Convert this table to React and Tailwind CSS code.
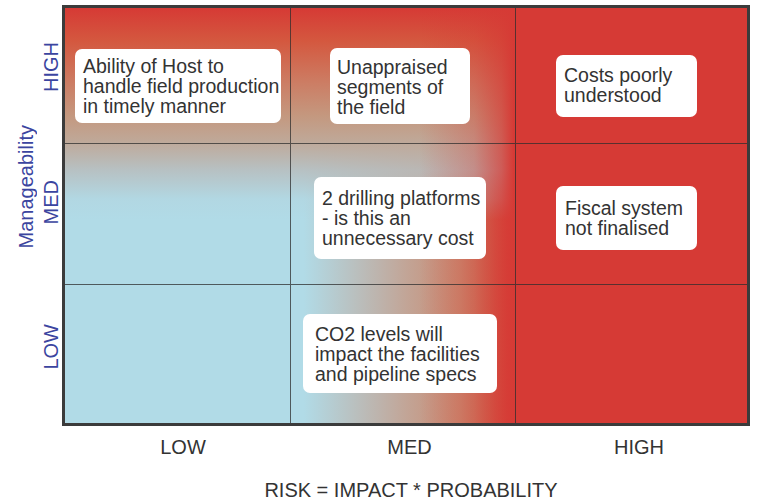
import React from "react";

// risk matrix: rows are manageability (HIGH -> LOW), columns are risk (LOW -> HIGH)
const cells = [
  {
    lines: "border-r border-b",
    note: { box: "ml-[10px] mt-[41px] w-[206px] h-[74px] pl-[8px]", text: ["Ability of Host to", "handle field production", "in timely manner"] },
  },
  {
    lines: "border-r border-b",
    note: { box: "ml-[39px] mt-[40px] w-[140px] h-[76px] pl-[7px] pt-[2px]", text: ["Unappraised", "segments of", "the field"] },
  },
  {
    lines: "border-b",
    note: { box: "ml-[40px] mt-[47px] w-[141px] h-[62px] pl-[8px] pb-[2px]", text: ["Costs poorly", "understood"] },
  },
  { lines: "border-r border-b", note: null },
  {
    lines: "border-r border-b",
    note: { box: "ml-[23px] mt-[33px] w-[172px] h-[82px] pl-[8px]", text: ["2 drilling platforms", "- is this an", "unnecessary cost"] },
  },
  {
    lines: "border-b",
    note: { box: "ml-[40px] mt-[42px] w-[141px] h-[64px] pl-[9px]", text: ["Fiscal system", "not finalised"] },
  },
  { lines: "border-r", note: null },
  {
    lines: "border-r",
    note: { box: "ml-[12px] mt-[29px] w-[194px] h-[79px] pl-[12px]", text: ["CO2 levels will", "impact the facilities", "and pipeline specs"] },
  },
  { lines: "", note: null },
];

const Note = ({ box, text }) => (
  <div className={`flex flex-col justify-center rounded-[7px] bg-white text-[19.5px] leading-[20px] text-[#333] whitespace-nowrap ${box}`}>
    {text.map((line) => (
      <span key={line}>{line}</span>
    ))}
  </div>
);

const App = () => {
  return (
    <div className="w-[768px] h-[500px] bg-white pt-[5px] font-['Liberation_Sans',Arial,sans-serif] overflow-hidden">
      <div className="flex h-[421px]">
        {/* y axis title */}
        <div className="w-[35px] pl-[16px] flex items-center pb-[57px]">
          <span className="[writing-mode:vertical-rl] rotate-180 text-[20px] leading-[20px] text-[#3b45a0]">Manageability</span>
        </div>
        {/* y axis levels */}
        <div className="w-[27px] pl-[6px] flex flex-col py-[3px]">
          <div className="h-[136px] flex items-center pb-[18px]">
            <span className="[writing-mode:vertical-rl] rotate-180 text-[20px] leading-[20px] text-[#3b45a0]">HIGH</span>
          </div>
          <div className="h-[141px] flex items-center pb-[24px]">
            <span className="[writing-mode:vertical-rl] rotate-180 text-[20px] leading-[20px] text-[#3b45a0]">MED</span>
          </div>
          <div className="flex-1 flex items-center pb-[15px]">
            <span className="[writing-mode:vertical-rl] rotate-180 text-[20px] leading-[20px] text-[#3b45a0]">LOW</span>
          </div>
        </div>

        {/* matrix */}
        <div className="w-[688px] h-[421px] border-[3px] border-[#3b3b3b] grid grid-cols-[226px_225px_1fr] grid-rows-[136px_141px_1fr] bg-[linear-gradient(to_right,rgba(214,58,53,0)_52%,rgba(214,58,53,0.3)_60%,rgba(214,58,53,0.7)_64%,#d63a35_65.8%),linear-gradient(to_bottom,#d63a35_0%,#d4583f_8%,#cc7d64_18%,#c4987f_26%,#bfa898_32%,rgba(184,188,188,0.85)_39%,rgba(179,210,220,0.4)_46%,rgba(177,219,231,0)_51%),linear-gradient(to_right,#b1dbe7_35%,#c2a597_50%,#c98a70_58%,#cd6d55_62%,#d44a3c_65%)]">
          {cells.map((cell, i) => (
            <div key={i} className={`flex items-start border-[rgba(45,45,45,0.75)] ${cell.lines}`}>
              {cell.note && <Note box={cell.note.box} text={cell.note.text} />}
            </div>
          ))}
        </div>
      </div>

      {/* x axis levels */}
      <div className="flex pl-[69px] mt-[11px] text-[20px] leading-[20px] text-[#333]">
        <div className="w-[228px] text-center">LOW</div>
        <div className="w-[225px] text-center">MED</div>
        <div className="w-[234px] text-center">HIGH</div>
      </div>

      <div className="mt-[23px] pl-[54px] text-center text-[20px] leading-[20px] text-[#333]">
        RISK = IMPACT * PROBABILITY
      </div>
    </div>
  );
};

export default App;
